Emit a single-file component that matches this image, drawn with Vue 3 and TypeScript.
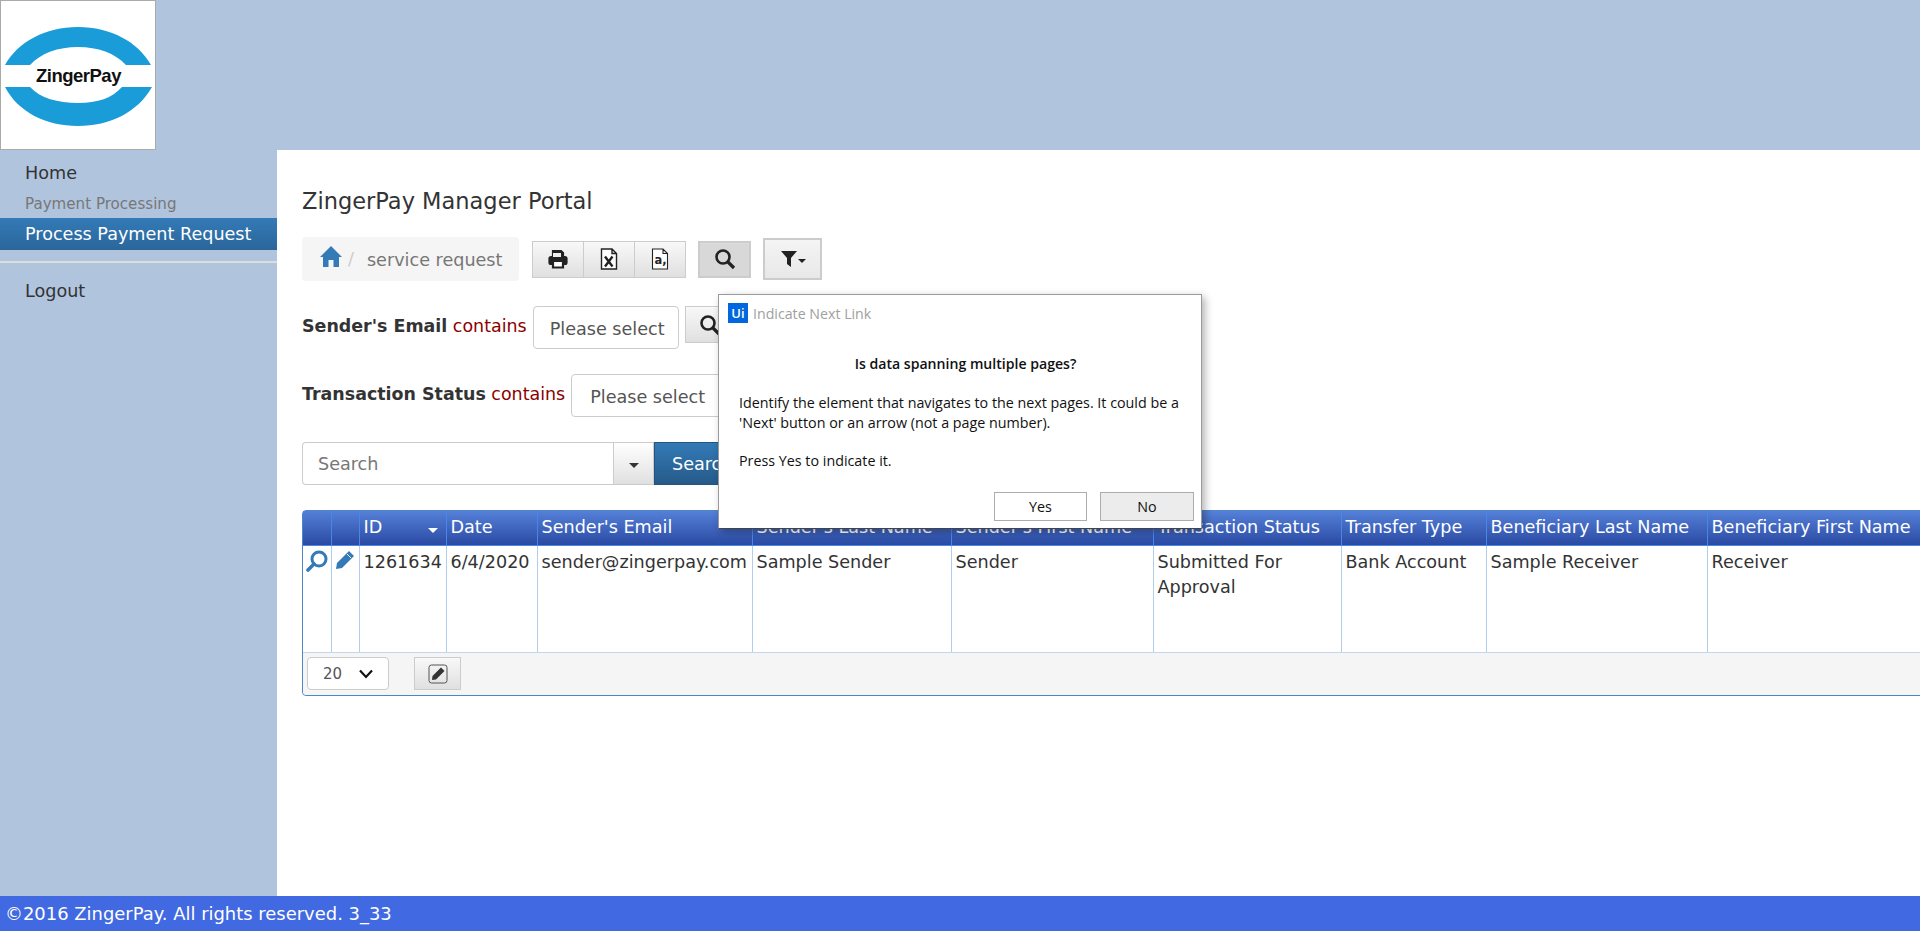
<template>
  <div class="page">
    <header class="top">
      <div class="logo">
        <svg width="154" height="148" viewBox="1 1 154 148">
          <path d="M5 65 C18 42 45 27 78 27 C111 27 138 42 151 65 L126 65 C115 53 98 47 78 47 C58 47 41 53 30 65 Z" fill="#1a9cd8" />
          <path d="M5 87 L30 87 C40 98 58 103 78 103 C98 103 112 98 122 87 L152 87 C138 112 110 126 78 126 C46 126 18 112 5 87 Z" fill="#1a9cd8" />
        </svg>
        <span class="logoText">ZingerPay</span>
      </div>
    </header>

    <div class="middle">
      <nav class="side">
        <a class="navLink">Home</a>
        <div class="navGroup">Payment Processing</div>
        <a class="navLink navActive">Process Payment Request</a>
        <div class="navRule"></div>
        <a class="navLink">Logout</a>
      </nav>

      <main class="content">
        <h1 class="title">ZingerPay Manager Portal</h1>

        <div class="toolbar">
          <div class="crumb">
            <svg class="homeIcon" width="22" height="22" viewBox="0 0 22 22">
              <path d="M11 1 L22 12 L19 12 L19 22 L13.5 22 L13.5 15 L8.5 15 L8.5 22 L3 22 L3 12 L0 12 Z" fill="#337ab7" />
            </svg>
            <span class="slash">/</span>
            <span class="crumbText">service request</span>
          </div>
          <div class="btnGroup">
            <button class="tool" type="button">
              <svg width="20" height="20" viewBox="0 0 20 20">
                <path d="M5 8 V2 H13 L15 4 V8 M5 15 H3 Q1.5 15 1.5 13.5 V9.5 Q1.5 8 3 8 H17 Q18.500 8 18.500 9.500 V13.500 Q18.500 15 17 15 H15" fill="#222" stroke="#222" stroke-width="2.2" />
                <path d="M5 4 H13 V8 H5 Z" fill="#eee" />
                <path d="M5 12 H15 V18.500 H5 Z" fill="#fff" stroke="#222" stroke-width="2.2" />
              </svg>
            </button>
            <button class="tool" type="button">
              <svg width="20" height="22" viewBox="0 0 20 22">
                <path d="M2.500 1 H13 L17.500 5.500 V21 H2.500 Z M13 1 V5.500 H17.500" fill="#fff" stroke="#222" stroke-width="1.400" />
                <path d="M6 8.500 L13.500 18.500 M13.500 8.500 L6 18.500" fill="none" stroke="#222" stroke-width="2.400" />
              </svg>
            </button>
            <button class="tool" type="button">
              <svg width="20" height="22" viewBox="0 0 20 22">
                <path d="M2.500 1 H13 L17.500 5.500 V21 H2.500 Z M13 1 V5.500 H17.500" fill="#fff" stroke="#222" stroke-width="1.100" />
                <text x="4.500" y="16" class="fileLetter">a,</text>
              </svg>
            </button>
          </div>
          <button class="tool searchToggle" type="button">
            <svg width="22" height="22" viewBox="0 0 22 22">
              <circle cx="9" cy="9" r="6.500" fill="none" stroke="#222" stroke-width="2.600" />
              <path d="M13.500 13.500 L20 20" stroke="#222" stroke-width="3.200" />
            </svg>
          </button>
          <button class="tool filterBtn" type="button">
            <svg width="26" height="18" viewBox="0 0 26 18">
              <path d="M1 1 H17 L11 8 V17 L7 14 V8 Z" fill="#222" />
              <path d="M18 9 H26 L22 13 Z" fill="#222" />
            </svg>
          </button>
        </div>

        <div class="filterRow">
          <label class="filterLabel"><b>Sender's Email</b> <span class="op">contains</span></label>
          <div class="select">Please select</div>
          <button class="tool rowSearch" type="button">
            <svg width="22" height="22" viewBox="0 0 22 22">
              <circle cx="9" cy="9" r="6.500" fill="none" stroke="#222" stroke-width="2.600" />
              <path d="M13.500 13.500 L20 20" stroke="#222" stroke-width="3.200" />
            </svg>
          </button>
        </div>

        <div class="filterRow">
          <label class="filterLabel"><b>Transaction Status</b> <span class="op">contains</span></label>
          <div class="select statusSelect">Please select</div>
        </div>

        <div class="searchBar">
          <div class="searchInput">Search</div>
          <button class="caretBtn" type="button"><i class="caret"></i></button>
          <button class="searchBtn" type="button">Search</button>
        </div>

        <div class="grid">
          <table>
            <colgroup>
              <col v-for="c in columns" :key="c.key" :style="{ width: c.width + 'px' }" />
            </colgroup>
            <thead>
              <tr>
                <th v-for="c in columns" :key="c.key">
                  {{ c.label }}<i v-if="c.key === 'id'" class="sortCaret"></i>
                </th>
              </tr>
            </thead>
            <tbody>
              <tr>
                <td class="iconCell">
                  <svg width="22" height="22" viewBox="0 0 22 22">
                    <circle cx="13" cy="9" r="7" fill="none" stroke="#337ab7" stroke-width="3" />
                    <path d="M8 14 L2 20" stroke="#337ab7" stroke-width="3.600" stroke-linecap="round" />
                  </svg>
                </td>
                <td class="iconCell">
                  <svg width="20" height="20" viewBox="0 0 20 20">
                    <path d="M14 1 L19 6 L7 18 L1 19 L2 13 Z" fill="#337ab7" />
                    <path d="M12 4 L16 8" stroke="#fff" stroke-width="1" />
                  </svg>
                </td>
                <td v-for="c in dataColumns" :key="c.key">{{ row[c.key] }}</td>
              </tr>
            </tbody>
          </table>
          <div class="pager">
            <div class="pageSize">
              <span>20</span>
              <svg width="16" height="10" viewBox="0 0 16 10">
                <path d="M2 1.500 L8 8 L14 1.500" fill="none" stroke="#111" stroke-width="2.200" />
              </svg>
            </div>
            <button class="tool pagerEdit" type="button">
              <svg width="20" height="20" viewBox="0 0 20 20">
                <rect x="1" y="1" width="18" height="18" rx="2.500" fill="none" stroke="#555" stroke-width="1" />
                <path d="M13 3.500 L16.500 7 L8 15.500 L4 16 L4.500 12 Z" fill="#333" />
              </svg>
            </button>
          </div>
        </div>
      </main>
    </div>

    <footer class="foot">©2016 ZingerPay. All rights reserved. 3_33</footer>

    <section class="dialog">
      <div class="dialogHead">
        <span class="uiMark">Ui</span>
        <span class="dialogTitle">Indicate Next Link</span>
      </div>
      <p class="dialogQuestion">Is data spanning multiple pages?</p>
      <p class="dialogText">Identify the element that navigates to the next pages. It could be a<br />'Next' button or an arrow (not a page number).</p>
      <p class="dialogText dialogPress">Press Yes to indicate it.</p>
      <div class="dialogActions">
        <button class="dlgBtn" type="button">Yes</button>
        <button class="dlgBtn dlgNo" type="button">No</button>
      </div>
    </section>
  </div>
</template>

<script setup lang="ts">
interface Column {
  key: string;
  label: string;
  width: number;
}

const columns: Column[] = [
  { key: 'view', label: '', width: 28 },
  { key: 'edit', label: '', width: 28 },
  { key: 'id', label: 'ID', width: 87 },
  { key: 'date', label: 'Date', width: 91 },
  { key: 'email', label: "Sender's Email", width: 215 },
  { key: 'lastName', label: "Sender's Last Name", width: 199 },
  { key: 'firstName', label: "Sender's First Name", width: 202 },
  { key: 'status', label: 'Transaction Status', width: 188 },
  { key: 'type', label: 'Transfer Type', width: 145 },
  { key: 'benLast', label: 'Beneficiary Last Name', width: 221 },
  { key: 'benFirst', label: 'Beneficiary First Name', width: 230 },
];

const dataColumns = columns.slice(2);

const row: Record<string, string> = {
  id: '1261634',
  date: '6/4/2020',
  email: 'sender@zingerpay.com',
  lastName: 'Sample Sender',
  firstName: 'Sender',
  status: 'Submitted For Approval',
  type: 'Bank Account',
  benLast: 'Sample Receiver',
  benFirst: 'Receiver',
};
</script>

<style>
html,
body {
  margin: 0;
  height: 100%;
  overflow: hidden;
}
</style>

<style scoped>
.page {
  position: relative;
  display: flex;
  flex-direction: column;
  height: 931px;
  overflow: hidden;
  background: #b0c4de;
  font-family: "DejaVu Sans", Verdana, sans-serif;
  font-size: 17.6px;
  color: #333;
}

.top {
  height: 150px;
  flex: none;
}

.logo {
  position: relative;
  box-sizing: border-box;
  width: 156px;
  height: 150px;
  background: #fff;
  border: 1px solid #aaa;
}

.logo svg {
  display: block;
}

.logoText {
  position: absolute;
  left: 35px;
  top: 64px;
  line-height: 22px;
  font-family: "Liberation Sans", Arial, sans-serif;
  font-size: 18.500px;
  font-weight: 700;
  letter-spacing: -0.5px;
  color: #111;
}

.middle {
  flex: 1;
  display: flex;
  min-height: 0;
}

.side {
  width: 277px;
  flex: none;
  padding-top: 7px;
  box-sizing: border-box;
}

.navLink {
  display: block;
  padding-left: 25px;
  height: 32px;
  line-height: 32px;
  color: #333;
}

.navGroup {
  padding-left: 25px;
  height: 29px;
  line-height: 30px;
  font-size: 15.1px;
  color: #777;
}

.navActive {
  color: #fff;
  background: linear-gradient(#337ab7, #2b669a);
}

.navRule {
  height: 2px;
  margin: 11px 0 12px;
  background: #ddd;
}

.content {
  flex: 1;
  min-width: 0;
  background: #fff;
  padding: 36px 0 0 25px;
}

.title {
  margin: 0;
  font-size: 22.500px;
  font-weight: 400;
  line-height: 30px;
  color: #333;
}

.toolbar {
  display: flex;
  align-items: center;
  margin-top: 21px;
  height: 44px;
}

.crumb {
  box-sizing: border-box;
  width: 217px;
  height: 44px;
  display: flex;
  align-items: center;
  background: #f5f5f5;
  border-radius: 4px;
  padding-left: 18px;
}

.homeIcon {
  margin-top: -6px;
}

.slash {
  margin-left: 6px;
  color: #ccc;
}

.crumbText {
  margin-left: 13px;
  padding-top: 2px;
  color: #777;
}

.btnGroup {
  display: flex;
  margin-left: 13px;
}

.tool {
  box-sizing: border-box;
  display: flex;
  align-items: center;
  justify-content: center;
  padding: 0;
  height: 37px;
  width: 52px;
  background: linear-gradient(#f8f8f8, #e0e0e0);
  border: 1px solid #ccc;
  border-radius: 0;
  box-shadow: inset 0 1px 0 rgba(255, 255, 255, 0.15);
}

.btnGroup .tool + .tool {
  margin-left: -1px;
}

.fileLetter {
  font-family: "DejaVu Sans", sans-serif;
  font-size: 11.500px;
  font-weight: 700;
  fill: #222;
}

.searchToggle {
  margin-left: 12px;
  width: 53px;
  background: #d8d8d8;
  border: 2px solid #ccc;
}

.filterBtn {
  margin-left: 12px;
  width: 59px;
  height: 42px;
  background: linear-gradient(#f4f4f4, #e8e8e8);
  border: 2px solid #ccc;
}

.filterRow {
  display: flex;
  align-items: flex-start;
  margin-top: 25px;
}

.filterLabel {
  line-height: 40px;
  font-size: 17.450px;
  color: #333;
}

.filterLabel b {
  font-weight: 700;
}

.op {
  color: #8b0000;
}

.select {
  box-sizing: border-box;
  margin-left: 6px;
  width: 146px;
  height: 43px;
  padding-left: 16px;
  line-height: 44px;
  border: 1px solid #ccc;
  border-radius: 4px;
  color: #555;
  background: #fff;
}

.statusSelect {
  width: 180px;
  padding-left: 18px;
}

.rowSearch {
  margin-left: 6px;
  width: 51px;
}

.searchBar {
  display: flex;
  margin-top: 25px;
  height: 43px;
}

.searchInput {
  box-sizing: border-box;
  width: 311px;
  padding-left: 15px;
  line-height: 43px;
  border: 1px solid #ccc;
  border-right: 0;
  border-radius: 4px 0 0 4px;
  color: #777;
}

.caretBtn {
  box-sizing: border-box;
  width: 41px;
  padding: 0;
  border: 1px solid #ccc;
  background: linear-gradient(#fff, #e0e0e0);
}

.caret {
  display: inline-block;
  border-top: 5px solid #333;
  border-left: 5px solid transparent;
  border-right: 5px solid transparent;
}

.searchBtn {
  width: 110px;
  padding: 0 0 0 17px;
  text-align: left;
  border: 1px solid #245580;
  background: linear-gradient(#337ab7, #265a88);
  color: #fff;
  font: inherit;
}

.grid {
  box-sizing: border-box;
  width: 1700px;
  margin-top: 25px;
  border: 1px solid #4a86c8;
  border-radius: 4px;
}

table {
  border-collapse: collapse;
  table-layout: fixed;
  width: 1634px;
}

th {
  height: 34px;
  padding: 0 4px 2px;
  box-sizing: border-box;
  text-align: left;
  font-weight: 400;
  color: #fff;
  white-space: nowrap;
  background: linear-gradient(#5580d8, #2a4aa3);
  border-right: 1px solid #4a86e8;
  position: relative;
}

td {
  height: 107px;
  padding: 4px 4px 0;
  box-sizing: border-box;
  vertical-align: top;
  line-height: 25px;
  border-top: 1px solid #4a86e8;
  border-right: 1px solid #b0cfee;
}

.iconCell {
  padding: 4px 0 0 3px;
}

.sortCaret {
  position: absolute;
  right: 8px;
  top: 17px;
  border-top: 5px solid #fff;
  border-left: 5px solid transparent;
  border-right: 5px solid transparent;
}

.pager {
  display: flex;
  align-items: flex-start;
  height: 43px;
  padding: 4px 0 0 4px;
  box-sizing: border-box;
  background: #f5f5f5;
  border-top: 1px solid #c4d4ea;
  border-radius: 0 0 4px 4px;
}

.pageSize {
  box-sizing: border-box;
  width: 82px;
  height: 33px;
  padding-left: 15px;
  display: flex;
  align-items: center;
  gap: 16px;
  background: #fff;
  border: 1px solid #ccc;
  border-radius: 4px;
  color: #555;
  font-size: 15px;
}

.pagerEdit {
  margin-left: 25px;
  width: 47px;
  height: 33px;
}

.foot {
  flex: none;
  height: 35px;
  line-height: 36px;
  padding-left: 5px;
  background: #4169e1;
  color: #fff;
  font-size: 17.950px;
}

/* floating window on top of the page */
.dialog {
  position: absolute;
  left: 718px;
  top: 294px;
  box-sizing: border-box;
  width: 484px;
  height: 235px;
  background: #fff;
  border: 1px solid #9a9a9a;
  border-bottom-color: #444;
  box-shadow: 3px 3px 8px rgba(0, 0, 0, 0.3);
  font-family: "Open Sans", "Noto Sans", sans-serif;
  font-size: 14.300px;
  color: #111;
}

.dialogHead {
  display: flex;
  align-items: center;
  height: 20px;
  margin: 8px 0 0 9px;
}

.uiMark {
  width: 20px;
  height: 20px;
  line-height: 20px;
  text-align: center;
  background: #0067df;
  color: #fff;
  font-weight: 600;
  font-size: 13px;
}

.dialogTitle {
  margin-left: 5px;
  font-size: 14.200px;
  color: #a0a0a0;
}

.dialogQuestion {
  margin: 31px 0 0;
  padding-left: 11px;
  text-align: center;
  font-size: 14.100px;
  font-weight: 600;
  line-height: 20px;
}

.dialogText {
  margin: 19px 0 0 20px;
  line-height: 20px;
}

.dialogPress {
  margin-top: 18px;
}

.dialogActions {
  position: absolute;
  right: 7px;
  bottom: 7px;
  display: flex;
  gap: 13px;
}

.dlgBtn {
  box-sizing: border-box;
  width: 93px;
  height: 29px;
  padding: 0;
  background: #fff;
  border: 1px solid #adadad;
  font: inherit;
  color: #111;
}

.dlgNo {
  width: 94px;
  background: #ececec;
}
</style>
